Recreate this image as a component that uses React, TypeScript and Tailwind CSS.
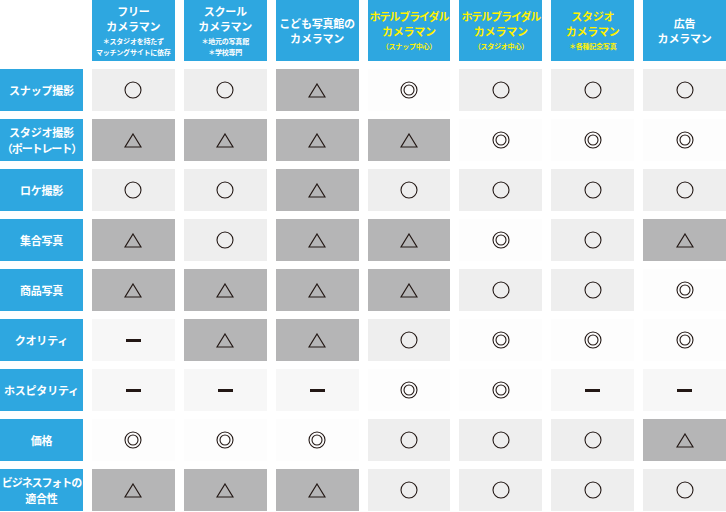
import React from "react";

type Mark = "o" | "x" | "t" | "d";

const headers = [
  { title: ["フリー", "カメラマン"], sub: ["＊スタジオを持たず", "マッチングサイトに依存"], yellow: false },
  { title: ["スクール", "カメラマン"], sub: ["＊地元の写真館", "＊学校専門"], yellow: false },
  { title: ["こども写真館の", "カメラマン"], sub: [], yellow: false },
  { title: ["ホテルブライダル", "カメラマン"], sub: ["（スナップ中心）"], yellow: true },
  { title: ["ホテルブライダル", "カメラマン"], sub: ["（スタジオ中心）"], yellow: true },
  { title: ["スタジオ", "カメラマン"], sub: ["＊各種記念写真"], yellow: true },
  { title: ["広告", "カメラマン"], sub: [], yellow: false },
];

// o = ○, x = ◎, t = △, d = —
const rows: { label: string[]; marks: Mark[] }[] = [
  { label: ["スナップ撮影"], marks: ["o", "o", "t", "x", "o", "o", "o"] },
  { label: ["スタジオ撮影", "（ポートレート）"], marks: ["t", "t", "t", "t", "x", "x", "x"] },
  { label: ["ロケ撮影"], marks: ["o", "o", "t", "o", "o", "o", "o"] },
  { label: ["集合写真"], marks: ["t", "o", "t", "t", "x", "o", "t"] },
  { label: ["商品写真"], marks: ["t", "t", "t", "t", "o", "o", "x"] },
  { label: ["クオリティ"], marks: ["d", "t", "t", "o", "x", "x", "x"] },
  { label: ["ホスピタリティ"], marks: ["d", "d", "d", "x", "x", "d", "d"] },
  { label: ["価格"], marks: ["x", "x", "x", "o", "o", "o", "t"] },
  { label: ["ビジネスフォトの", "適合性"], marks: ["t", "t", "t", "o", "o", "o", "o"] },
];

const cellBg: Record<Mark, string> = {
  o: "bg-[#eeeeee]",
  x: "bg-[#fdfdfd]",
  t: "bg-[#b5b5b6]",
  d: "bg-[#f7f7f7]",
};

function Symbol({ mark }: { mark: Mark }) {
  if (mark === "d") return <div className="w-[15px] h-[3px] bg-[#231815]" />;
  if (mark === "t")
    return (
      <svg width="18" height="15" viewBox="0 0 18 15">
        <polygon points="9,1 17,14 1,14" fill="none" stroke="#231815" strokeWidth="1.2" />
      </svg>
    );
  return (
    <svg width="18" height="18" viewBox="0 0 18 18">
      <circle cx="9" cy="9" r="8" fill="none" stroke="#231815" strokeWidth="1.1" />
      {mark === "x" && <circle cx="9" cy="9" r="5" fill="none" stroke="#231815" strokeWidth="1.1" />}
    </svg>
  );
}

// long lines of kana get squeezed so they fit the 83px boxes
const tight = (t: string) => (t.length >= 8 ? "tracking-[-0.1em]" : "tracking-[-0.02em]");

export default function App() {
  return (
    <div
      className="w-[726px] h-[512px] bg-white overflow-hidden"
      style={{ fontFamily: '"Noto Sans CJK JP", "Noto Sans", sans-serif' }}
    >
      <div className="grid grid-cols-8 gap-x-[9px] gap-y-[8px] grid-rows-[61px_repeat(9,42px)]">
        {/* header row */}
        <div />
        {headers.map((h, i) => (
          <div key={i} className="bg-[#2ea7e0] flex flex-col items-center justify-center text-center">
            <div className={`text-[11px] font-bold leading-[15px] ${h.yellow ? "text-[#fff100]" : "text-white"}`}>
              {h.title.map((t, j) => (
                <div key={j} className={`whitespace-nowrap ${tight(t)}`}>{t}</div>
              ))}
            </div>
            {h.sub.length > 0 && (
              <div className={`text-[7px] font-bold leading-[11px] mt-[2px] ${h.yellow ? "text-[#fff100]" : "text-white"}`}>
                {h.sub.map((t, j) => (
                  <div key={j} className="whitespace-nowrap tracking-[-0.03em]">{t}</div>
                ))}
              </div>
            )}
          </div>
        ))}

        {/* body rows */}
        {rows.map((r, i) => (
          <React.Fragment key={i}>
            <div className="bg-[#2ea7e0] flex flex-col items-center justify-center text-white text-[11px] font-bold leading-[16px] text-center">
              {r.label.map((t, j) => (
                <div key={j} className={`whitespace-nowrap ${tight(t)}`}>{t}</div>
              ))}
            </div>
            {r.marks.map((m, j) => (
              <div key={j} className={`${cellBg[m]} flex items-center justify-center`}>
                <Symbol mark={m} />
              </div>
            ))}
          </React.Fragment>
        ))}
      </div>
    </div>
  );
}
